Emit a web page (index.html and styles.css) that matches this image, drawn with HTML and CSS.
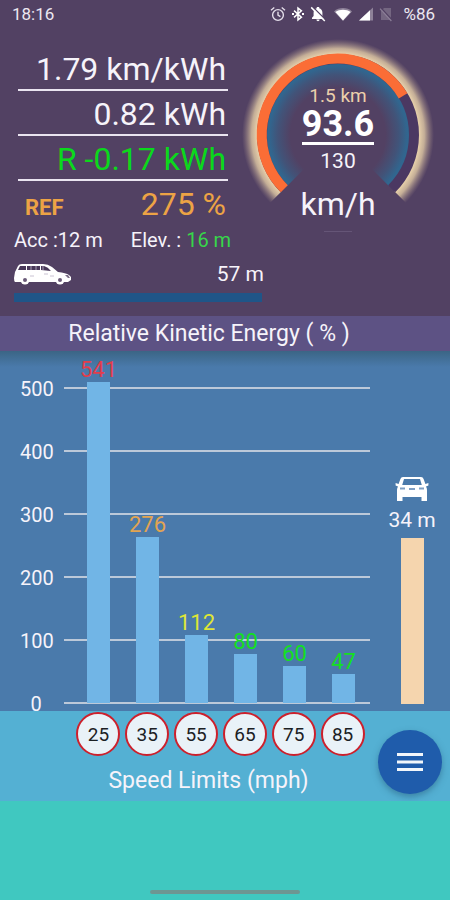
FILE: index.html
```html
<!DOCTYPE html>
<html lang="en">
<head>
<meta charset="utf-8">
<meta name="viewport" content="width=device-width, initial-scale=1">
<title>Relative Kinetic Energy</title>
<link rel="stylesheet" href="styles.css">
</head>
<body>
<div class="app">
  <header class="status">
    <time>18:16</time>
    <div class="status-icons">
      <svg width="16" height="16" viewBox="0 0 16 16" fill="none" stroke="#e4deea" stroke-width="1.4" aria-hidden="true"><circle cx="8" cy="9" r="5.4"/><path d="M8 5.8V9.2L10.4 10.6M1 4.2L4.3 1.5M15 4.2L11.7 1.5"/></svg>
      <svg width="14" height="16" viewBox="0 0 14 16" fill="none" stroke="#fff" stroke-width="1.5" aria-hidden="true"><path d="M3 4.6L10.4 11.2L7 14V2L10.4 4.8L3 11.4"/><path d="M1 8H3M11 8H13" stroke-width="2"/></svg>
      <svg width="16" height="16" viewBox="0 0 16 16" aria-hidden="true"><path d="M2 13V11.8L3.6 10V6.6C3.6 4.2 5 2.7 6.8 2.2V1H9.2V2.2C11 2.7 12.4 4.2 12.4 6.6V10L14 11.8V13ZM6.4 13.6H9.6C9.4 15.8 6.6 15.8 6.4 13.6Z" fill="#fff"/><path d="M2.8 1L15.8 14" stroke="#524163" stroke-width="1.2"/><path d="M1.2 1.4L14.8 15" stroke="#fff" stroke-width="1.5"/></svg>
      <svg class="wifi" width="20" height="16" viewBox="0 0 20 16" aria-hidden="true"><path d="M1 5.4C6 1 14 1 19 5.4L10 15Z" fill="#8e8299"/><path d="M2.4 6C6.6 3 13.4 3 17.6 6L10 14.6Z" fill="#fff"/></svg>
      <svg width="16" height="16" viewBox="0 0 16 16" aria-hidden="true"><path d="M15 1.5V14.5H1Z" fill="#8e8299"/><path d="M12 4.3V14.5H1Z" fill="#fff"/></svg>
      <svg class="sim" width="14" height="16" viewBox="0 0 14 16" aria-hidden="true"><path d="M5 2H12V14H2V5Z" fill="#746681"/><path d="M2 2L13 14" stroke="#524163" stroke-width="1.4"/><path d="M1 2.6L12.4 15" stroke="#8b7e97" stroke-width="1.2"/></svg>
      <span>%86</span>
    </div>
  </header>

  <section class="summary">
    <div class="stats">
      <p class="stat">1.79 km/kWh</p>
      <p class="stat">0.82 kWh</p>
      <p class="stat regen">R -0.17 kWh</p>
      <p class="stat ref"><b>REF</b><span>275 %</span></p>
    </div>
    <div class="gauge">
      <svg viewBox="0 0 192 192" aria-hidden="true">
        <defs>
          <radialGradient id="halo" gradientUnits="userSpaceOnUse" cx="96" cy="96" r="96">
            <stop offset=".84" stop-color="#ead3ac"/>
            <stop offset=".9" stop-color="#d8c1a0" stop-opacity=".85"/>
            <stop offset="1" stop-color="#a89088" stop-opacity="0"/>
          </radialGradient>
          <radialGradient id="cool" gradientUnits="userSpaceOnUse" cx="96" cy="96" r="72">
            <stop offset=".66" stop-color="#31668f" stop-opacity="0"/>
            <stop offset=".84" stop-color="#31668f" stop-opacity=".5"/>
            <stop offset=".96" stop-color="#31668f"/>
          </radialGradient>
        </defs>
        <g fill="none">
          <path d="M33.8 158.2A88 88 0 1 1 158.2 158.2" stroke="url(#halo)" stroke-width="16"/>
          <path d="M54.3 137.7A59 59 0 1 1 137.7 137.7" stroke="url(#cool)" stroke-width="26"/>
          <path d="M42.3 149.7A76 76 0 1 1 149.7 149.7" stroke="#4b3862" stroke-width="10"/>
          <path d="M42.3 149.7A76 76 0 1 1 161.1 56.9" stroke="#fb6d36" stroke-width="10"/>
        </g>
      </svg>
      <div class="readout">
        <span class="distance">1.5 km</span>
        <strong class="speed">93.6</strong>
        <span class="limit">130</span>
        <span class="unit">km/h</span>
      </div>
    </div>
  </section>

  <section class="trip">
    <p class="trip-row"><span>Acc :12 m</span><span>Elev. : <span class="elev">16 m</span></span></p>
    <div class="length-row">
      <svg width="58" height="22" viewBox="0 0 58 22" aria-hidden="true">
        <path d="M1 9L4 3Q5 1 8 1H29Q34 1 38 4L44 9Q52 10 55 12L57 14V17L54 19H1Q0 18 0 15Z" fill="#fff"/>
        <path d="M4 7L6 3H12V7ZM13 3H26V7H13ZM27 3H30Q34 4 37 8L27 7Z" fill="#493859"/>
        <path d="M17 3V7M22 3V7M29 3V7" stroke="#aaa0b6" stroke-width="1"/>
        <path d="M16 13H20M30 11H34M36 13H40" stroke="#c9c2d2" stroke-width="1" fill="none"/>
        <path d="M51 12H54L56 15H54Z" fill="#7b6d87"/>
        <circle cx="11" cy="17" r="4.5" fill="#fff"/><circle cx="11" cy="17" r="2" fill="#6a5a78"/>
        <circle cx="46" cy="17" r="4.5" fill="#fff"/><circle cx="46" cy="17" r="2" fill="#6a5a78"/>
      </svg>
      <span>57 m</span>
    </div>
    <div class="length-bar"></div>
  </section>

  <h1 class="title">Relative Kinetic Energy ( % )</h1>

  <section class="chart">
    <div class="plot">
      <div class="ticks">
        <div class="tick"><span>500</span></div>
        <div class="tick"><span>400</span></div>
        <div class="tick"><span>300</span></div>
        <div class="tick"><span>200</span></div>
        <div class="tick"><span>100</span></div>
        <div class="tick"><span>0</span></div>
      </div>
      <div class="columns">
        <div class="column red"><span>541</span><i style="height:91.2%"></i></div>
        <div class="column amber"><span>276</span><i style="height:47.2%"></i></div>
        <div class="column yellow"><span>112</span><i style="height:19.3%"></i></div>
        <div class="column green"><span>80</span><i style="height:13.9%"></i></div>
        <div class="column green"><span>60</span><i style="height:10.5%"></i></div>
        <div class="column green"><span>47</span><i style="height:8.2%"></i></div>
      </div>
    </div>
    <div class="ahead">
      <svg width="34" height="26" viewBox="0 0 34 26" aria-hidden="true">
        <path fill="#fff" fill-rule="evenodd" d="M8 1H26Q28 1 28.6 3L30.4 8L33.4 7V9.6L31 10.4Q32 12 32 14V25H26.5V21H7.5V25H2V14Q2 12 3 10.4L.6 9.6V7L3.6 8L5.4 3Q6 1 8 1ZM9 3L7.2 9H26.8L25 3Z"/>
        <path d="M5 12.6H10M14 13H20M24 12.6H29" stroke="#7f9fc4" stroke-width="2"/>
      </svg>
      <span>34 m</span>
      <i style="height:46.9%"></i>
    </div>
  </section>

  <section class="limits">
    <div class="limits-main">
      <div class="signs">
        <span class="sign">25</span><span class="sign">35</span><span class="sign">55</span><span class="sign">65</span><span class="sign">75</span><span class="sign">85</span>
      </div>
      <p class="caption">Speed Limits (mph)</p>
    </div>
    <button class="fab" type="button" aria-label="Menu">
      <svg width="28" height="20" viewBox="0 0 28 20" stroke="#f2f6fb" stroke-width="3" aria-hidden="true"><path d="M1 2.5H27M1 10H27M1 17.5H27"/></svg>
    </button>
  </section>

  <footer class="foot"><span class="handle"></span></footer>
</div>
</body>
</html>
```

FILE: styles.css
```css
* { box-sizing: border-box; }

body {
  margin: 0;
  font-family: Roboto, "Liberation Sans", sans-serif;
  color: #f6f3fa;
  background: #40c8c0;
}

p, h1 { margin: 0; font-weight: 400; }
svg { display: block; flex: none; }

.app {
  min-height: 100vh;
  display: flex;
  flex-direction: column;
  background: #524163;
}

.status {
  display: flex;
  justify-content: space-between;
  align-items: center;
  height: 28px;
  padding: 0 15px 0 12px;
  font-size: 17px;
  color: #ece7f1;
}

.status-icons { display: flex; align-items: center; gap: 5px; }
.status-icons .wifi { margin-left: 2px; }
.status-icons .sim { margin: 0 5px 0 0; }

.summary {
  display: flex;
  justify-content: space-between;
  height: 200px;
  padding: 0 16px 0 18px;
}

.stats { width: 210px; padding-top: 18px; }

.stat {
  height: 45px;
  padding-right: 2px;
  border-bottom: 2px solid #eae4f0;
  font-size: 32px;
  line-height: 46px;
  text-align: right;
  white-space: nowrap;
}

.regen { color: #0bd81c; }

.ref {
  display: flex;
  justify-content: space-between;
  align-items: baseline;
  padding-left: 7px;
  border: 0;
  color: #eda345;
}

.ref b { font-size: 22px; font-weight: 700; }

.gauge { display: grid; width: 192px; padding-top: 11px; }
.gauge > * { grid-area: 1 / 1; }

.readout {
  display: flex;
  flex-direction: column;
  align-items: center;
  padding-top: 45px;
}

.distance { font-size: 19px; line-height: 23px; color: #ecd0ac; }

.speed {
  border-bottom: 3px solid #fff;
  font-size: 36px;
  line-height: 35px;
  color: #fff;
}

.limit { padding-top: 2px; font-size: 21px; line-height: 28px; }

.unit { padding-top: 11px; font-size: 32px; line-height: 36px; }

.unit::after {
  content: "";
  display: block;
  width: 28px;
  height: 1px;
  margin: 9px auto 0;
  background: #655577;
}

.trip {
  width: 264px;
  height: 88px;
  margin-left: 14px;
  font-size: 20px;
}

.trip-row {
  display: flex;
  gap: 28px;
  line-height: 24px;
  white-space: pre;
}

.elev { color: #37d64a; }

.length-row {
  display: flex;
  justify-content: space-between;
  align-items: center;
  height: 41px;
  padding: 3px 14px 0 0;
  font-size: 21px;
}

.length-bar { height: 9px; margin-right: 16px; background: #1f5588; }

.title {
  height: 35px;
  font-size: 23px;
  line-height: 35px;
  text-align: center;
  padding-right: 32px;
  background: #5d5284;
}

.chart {
  display: flex;
  height: 360px;
  padding: 0 8px 7px 20px;
  background: linear-gradient(#3b6585, #4a7aab 16px);
}

.plot {
  display: grid;
  grid-template-rows: 100%;
  flex: 1;
  margin-right: 12px;
}

.plot > * { grid-area: 1 / 1; }

.ticks {
  display: grid;
  grid-template-rows: 38px repeat(5, 63px);
}

.tick {
  display: grid;
  grid-template-columns: 32px 1fr;
  align-items: end;
  gap: 12px;
  font-size: 20px;
}

.tick span { line-height: 24px; margin-bottom: -12px; text-align: center; }
.tick::after { content: ""; height: 2px; background: #bcc9d9; }

.columns {
  display: grid;
  grid-template-columns: repeat(6, 1fr);
  grid-template-rows: 100%;
  padding: 0 2px 1px 54px;
}

.column {
  display: flex;
  flex-direction: column;
  justify-content: flex-end;
  align-items: center;
  font-size: 22px;
  line-height: 24px;
}

.column i { flex: none; width: 23px; background: #71b5e6; }
.red { color: #e33d4b; }
.amber { color: #e2a451; }
.yellow { color: #dfe635; }
.green { color: #13e021; }

.ahead {
  display: flex;
  flex-direction: column;
  justify-content: flex-end;
  align-items: center;
  width: 60px;
  font-size: 21px;
  line-height: 36px;
}

.ahead i { width: 23px; background: #f5d5ae; }

.limits {
  display: flex;
  align-items: center;
  height: 90px;
  padding: 0 8px 0 74px;
  background: #54b0d3;
}

.limits-main { flex: 1; height: 100%; }

.signs {
  display: grid;
  grid-template-columns: repeat(6, 1fr);
  justify-items: center;
  padding-top: 1px;
}

.sign {
  width: 44px;
  height: 44px;
  border: 2px solid #cd202c;
  border-radius: 50%;
  background: #e9f2f8;
  font-size: 19px;
  line-height: 42px;
  text-align: center;
  color: #1b2024;
}

.caption {
  margin-right: 24px;
  font-size: 23px;
  line-height: 50px;
  text-align: center;
}

.fab {
  display: grid;
  place-items: center;
  width: 64px;
  height: 64px;
  margin: 11px 0 0 11px;
  padding: 0;
  border: 0;
  border-radius: 50%;
  background: #1f5cab;
  box-shadow: 0 3px 6px #23577a80;
}

.foot {
  flex: 1;
  display: flex;
  justify-content: center;
  align-items: flex-end;
  min-height: 99px;
  padding-bottom: 6px;
  background: #40c8c0;
}

.handle { width: 150px; height: 4px; border-radius: 2px; background: #6d9692; }
```
